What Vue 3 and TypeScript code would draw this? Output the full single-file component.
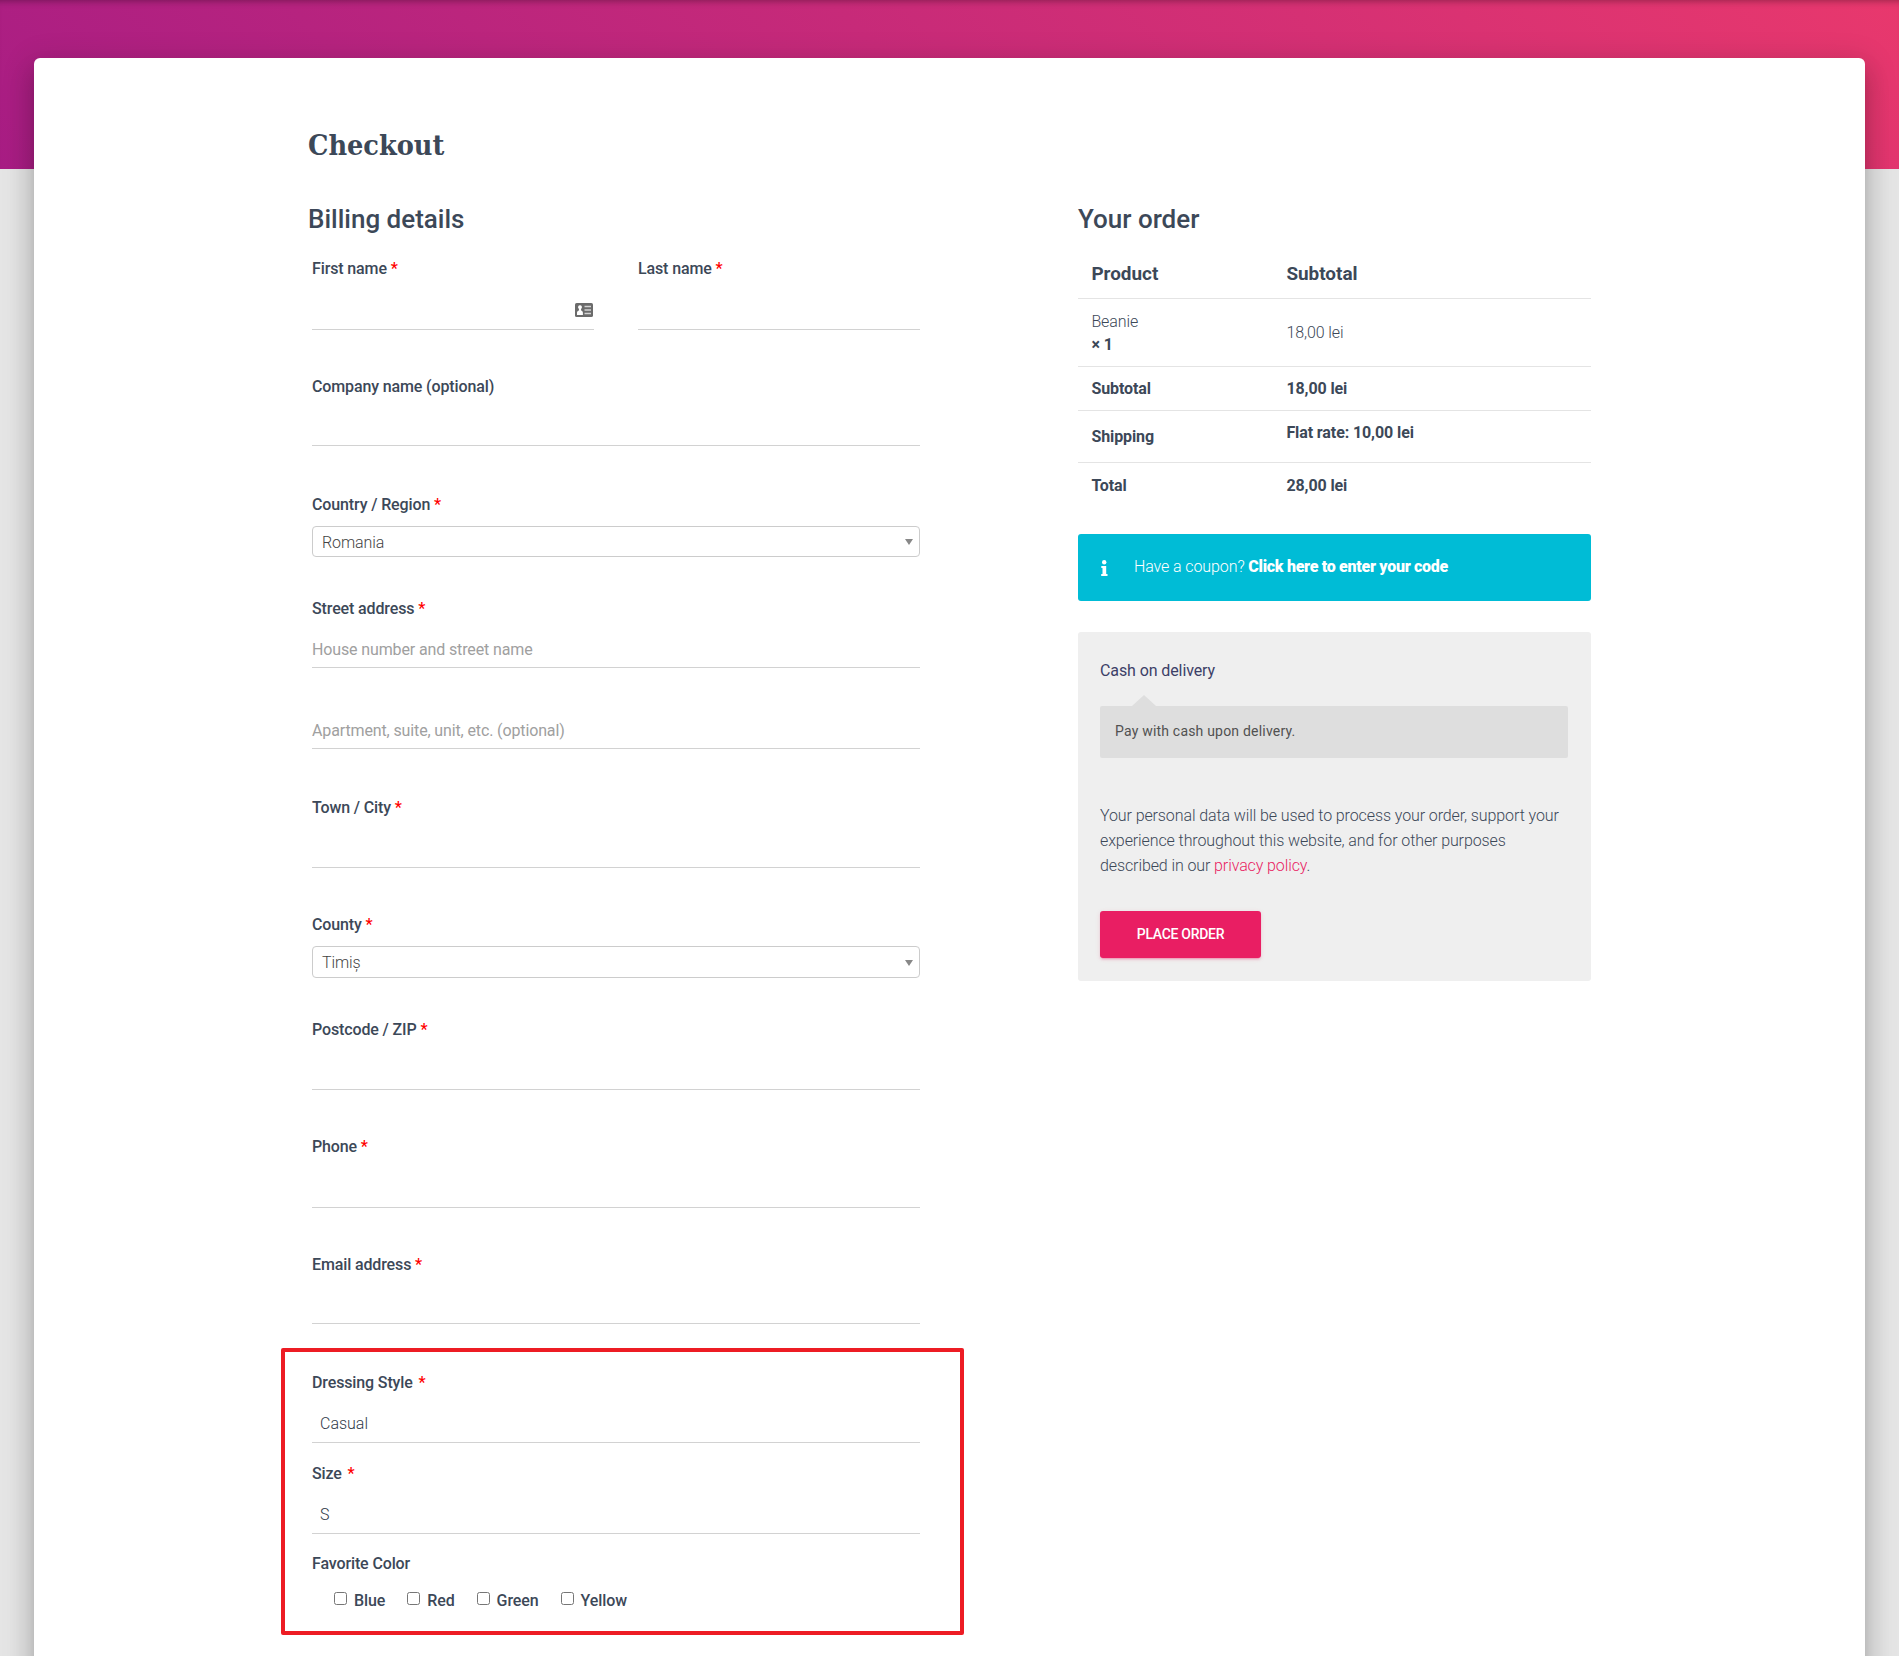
<script setup lang="ts">
import { reactive } from 'vue'

type FieldKind = 'text' | 'select'

interface Field {
  id: string
  label: string
  kind: FieldKind
  required?: boolean
  placeholder?: string
  icon?: boolean
}

const fields: Field[] = [
  { id: 'first-name', label: 'First name', kind: 'text', required: true, icon: true },
  { id: 'last-name', label: 'Last name', kind: 'text', required: true },
  { id: 'company', label: 'Company name (optional)', kind: 'text' },
  { id: 'country', label: 'Country / Region', kind: 'select', required: true },
  { id: 'street', label: 'Street address', kind: 'text', required: true, placeholder: 'House number and street name' },
  { id: 'apartment', label: '', kind: 'text', placeholder: 'Apartment, suite, unit, etc. (optional)' },
  { id: 'city', label: 'Town / City', kind: 'text', required: true },
  { id: 'county', label: 'County', kind: 'select', required: true },
  { id: 'postcode', label: 'Postcode / ZIP', kind: 'text', required: true },
  { id: 'phone', label: 'Phone', kind: 'text', required: true },
  { id: 'email', label: 'Email address', kind: 'text', required: true }
]

const values = reactive<Record<string, string>>({
  country: 'Romania',
  county: 'Timiș',
  style: 'Casual',
  size: 'S'
})

const extras = [
  { id: 'style', label: 'Dressing Style' },
  { id: 'size', label: 'Size' }
]

const colors = ['Blue', 'Red', 'Green', 'Yellow']
const picked = reactive<Record<string, boolean>>({})
</script>

<template>
  <div class="page">
    <div class="hero"></div>
    <main class="card">
      <h1 class="title">Checkout</h1>
      <div class="columns">
        <form class="billing" @submit.prevent>
          <h3 class="heading">Billing details</h3>
          <div class="fields">
            <div v-for="f in fields" :key="f.id" class="field" :class="'field-' + f.id">
              <label v-if="f.label" class="label" :for="f.id">
                {{ f.label }} <span v-if="f.required" class="required">*</span>
              </label>
              <div v-if="f.kind === 'select'" :id="f.id" class="select">
                <span>{{ values[f.id] }}</span>
                <i class="arrow"></i>
              </div>
              <div v-else class="control">
                <input :id="f.id" v-model="values[f.id]" type="text" :placeholder="f.placeholder" />
                <svg v-if="f.icon" class="autofill" width="18" height="14" viewBox="0 0 18 14">
                  <rect width="18" height="14" rx="1.6" fill="#6b6b6b" />
                  <path d="M5 2.3a1.9 1.9 0 0 1 1.2 3.4l-.3 1.5c1.2.5 2 1.3 2 2.6V12H2V9.8c0-1.3.9-2.1 2.1-2.6l-.3-1.5A1.9 1.9 0 0 1 5 2.3z" fill="#fff" />
                  <path d="M9.5 3.5H16M9.5 7H16M9.5 10.5H16" stroke="#d4d4d4" stroke-width="1.5" />
                </svg>
              </div>
            </div>
          </div>

          <section class="extras">
            <div v-for="e in extras" :key="e.id" class="extra">
              <label class="label" :for="e.id">{{ e.label }} <span class="required wide">*</span></label>
              <div class="control">
                <input :id="e.id" v-model="values[e.id]" type="text" />
              </div>
            </div>
            <div class="label">Favorite Color</div>
            <div class="choices">
              <label v-for="c in colors" :key="c" class="choice">
                <input v-model="picked[c]" type="checkbox" />{{ c }}
              </label>
            </div>
          </section>
        </form>

        <aside class="order">
          <h3 class="heading">Your order</h3>
          <div class="table">
            <div class="row row-head"><span>Product</span><span>Subtotal</span></div>
            <div class="row row-item">
              <span>Beanie<br /><strong>× 1</strong></span><span>18,00 lei</span>
            </div>
            <div class="row row-subtotal"><span>Subtotal</span><span>18,00 lei</span></div>
            <div class="row row-shipping"><span>Shipping</span><span class="rate">Flat rate: 10,00 lei</span></div>
            <div class="row row-total"><span>Total</span><span>28,00 lei</span></div>
          </div>

          <div class="coupon">
            <svg width="7" height="16" viewBox="0 0 7 16" fill="#fff">
              <circle cx="3.2" cy="2.3" r="2.2" />
              <path d="M.3 6h4.9v7.9h1.3V16H.2v-2.1h1.3V8.1H.3z" />
            </svg>
            <p>Have a coupon? <a>Click here to enter your code</a></p>
          </div>

          <div class="payment">
            <div class="method">Cash on delivery</div>
            <div class="method-box">Pay with cash upon delivery.</div>
            <p class="privacy">
              Your personal data will be used to process your order, support your experience throughout this website, and
              for other purposes described in our <a>privacy policy</a>.
            </p>
            <button type="button" class="place-order">PLACE ORDER</button>
          </div>
        </aside>
      </div>
    </main>
  </div>
</template>

<style>
body {
  margin: 0;
  background: #e5e5e5;
}
</style>

<style scoped>
.page {
  height: 1656px;
  overflow: hidden;
  font-family: Roboto, sans-serif;
  font-size: 16px;
  font-weight: 300;
  letter-spacing: -0.1px;
  color: #3c4858;
  background: #e5e5e5;
}
.page *,
.page *::before {
  box-sizing: border-box;
}
.hero {
  height: 168.5px;
  background: linear-gradient(45deg, #a81d84 0%, #e8386d 100%);
  box-shadow: inset 0 7px 7px -6px rgba(0, 0, 0, 0.35);
}
.card {
  position: relative;
  height: 1700px;
  margin: -110.5px 34px 0;
  padding: 67px 274px 0;
  background: #fff;
  border-radius: 6px;
  box-shadow:
    0 16px 24px 2px rgba(0, 0, 0, 0.14),
    0 6px 30px 5px rgba(0, 0, 0, 0.12),
    0 8px 10px -5px rgba(0, 0, 0, 0.2);
}
.title {
  margin: 0;
  height: 77px;
  font-family: 'Roboto Slab', 'DejaVu Serif Condensed', 'DejaVu Serif', serif;
  font-stretch: condensed;
  font-size: 28.5px;
  font-weight: 700;
  letter-spacing: 0;
  line-height: 40px;
}
.columns {
  display: flex;
  justify-content: space-between;
}
.billing {
  width: 616px;
}
.order {
  width: 513px;
}
.heading {
  margin: 0;
  height: 57px;
  font-size: 26px;
  font-weight: 500;
  letter-spacing: 0;
  line-height: 34px;
}
.fields {
  display: grid;
  grid-template-columns: 282px 282px;
  column-gap: 44px;
  padding-left: 4px;
}
.field {
  display: flex;
  flex-direction: column;
  grid-column: 1 / -1;
  height: 70px;
  margin-bottom: 47px;
}
.field-first-name,
.field-last-name {
  grid-column: auto;
  height: 71px;
}
.field-company {
  height: 69px;
  margin-bottom: 49px;
}
.field-country {
  height: 62px;
  margin-bottom: 42px;
}
.field-street {
  height: 69px;
  margin-bottom: 45px;
}
.field-apartment {
  height: 36px;
  margin-bottom: 49px;
}
.field-county {
  height: 63px;
  margin-bottom: 42px;
}
.field-phone {
  height: 71px;
}
.field-email {
  height: 69px;
  margin-bottom: 24px;
}
.label {
  flex: none;
  display: block;
  height: 20px;
  line-height: 20px;
  font-weight: 500;
  letter-spacing: -0.13px;
}
.required {
  color: #f00;
}
.wide {
  margin-left: 2px;
}
.control {
  flex: 1;
  display: flex;
  align-items: flex-end;
  position: relative;
  border-bottom: 1px solid #d2d2d2;
}
.control input {
  width: 100%;
  height: 35px;
  padding: 0 0 1px;
  border: 0;
  outline: 0;
  background: none;
  font: 400 16px/20px Roboto, sans-serif;
  letter-spacing: -0.13px;
  color: #555;
}
.control input::placeholder {
  color: #a0a0a0;
  opacity: 1;
}
.autofill {
  position: absolute;
  right: 1px;
  bottom: 12px;
}
.select {
  flex: 1;
  display: flex;
  align-items: center;
  justify-content: space-between;
  margin-top: 11px;
  padding: 1px 6px 0 9px;
  border: 1px solid #ccc;
  border-radius: 4px;
  color: #444;
}
.arrow {
  border: 4.5px solid transparent;
  border-top: 6px solid #888;
  border-bottom: 0;
}
.extras {
  width: 683px;
  height: 287px;
  margin-left: -27px;
  padding: 21px 40px 0 27px;
  border: 4px solid #ed1c24;
  border-radius: 2px;
}
.extra {
  display: flex;
  flex-direction: column;
  height: 70px;
  margin-bottom: 21px;
}
.extra + .extra {
  margin-bottom: 20px;
}
.extra .control input {
  padding: 0 0 3px 8px;
  font-weight: 300;
  letter-spacing: 0;
  color: #303b4a;
}
.choices {
  display: flex;
  gap: 22px;
  margin-top: 17px;
  padding-left: 22px;
}
.choice {
  display: flex;
  line-height: 20px;
  font-weight: 500;
}
.choice input {
  width: 13px;
  height: 13px;
  margin: 1px 7px 0 0;
}
.row {
  display: flex;
  align-items: center;
  padding: 0 13.4px;
  border-bottom: 1px solid #e4e4e4;
  line-height: 23px;
  font-weight: 700;
}
.row span:first-child {
  width: 195px;
}
.row-head {
  height: 48px;
  margin-top: -8px;
  padding-bottom: 2px;
  font-size: 18.9px;
  font-weight: 700;
  letter-spacing: 0;
}
.row-item {
  height: 68px;
  font-weight: 300;
}
.row-item strong {
  font-weight: 700;
}
.row-subtotal {
  height: 44px;
}
.row-shipping {
  height: 52px;
}
.rate {
  margin-bottom: 8px;
}
.row-total {
  height: 48px;
  padding-bottom: 3px;
  border-bottom: 0;
}
.coupon {
  display: flex;
  gap: 26px;
  height: 67px;
  margin-top: 23px;
  padding: 20px 23px;
  border-radius: 3px;
  background: #00bcd6;
  color: #fff;
}
.coupon svg {
  margin-top: 6px;
}
.coupon p {
  margin: 0;
  line-height: 25px;
}
.coupon a {
  font-weight: 900;
  letter-spacing: -0.3px;
}
.payment {
  height: 349px;
  margin-top: 31px;
  padding: 28px 23px 0 22px;
  border-radius: 3px;
  background: #efefef;
}
.method {
  height: 46px;
  line-height: 22px;
  font-weight: 400;
  color: #3c4067;
}
.method-box {
  position: relative;
  height: 52px;
  padding: 0 15px;
  border-radius: 2px;
  background: #dedede;
  color: #515151;
  font-size: 14px;
  font-weight: 400;
  line-height: 50px;
  letter-spacing: 0.2px;
}
.method-box::before {
  content: '';
  position: absolute;
  left: 32px;
  top: -11px;
  border: 12px solid transparent;
  border-top: 0;
  border-bottom: 11px solid #dedede;
}
.privacy {
  margin: 45px 0 0;
  line-height: 25px;
}
.privacy a {
  color: #e91e63;
}
.place-order {
  width: 161px;
  height: 47px;
  margin-top: 33px;
  padding: 0 0 1px;
  border: 0;
  border-radius: 3px;
  background: #e91e63;
  box-shadow:
    0 2px 2px 0 rgba(233, 30, 99, 0.14),
    0 3px 1px -2px rgba(233, 30, 99, 0.2),
    0 1px 5px 0 rgba(233, 30, 99, 0.12);
  color: #fff;
  font: 500 14px Roboto, sans-serif;
  letter-spacing: -0.3px;
}
</style>
